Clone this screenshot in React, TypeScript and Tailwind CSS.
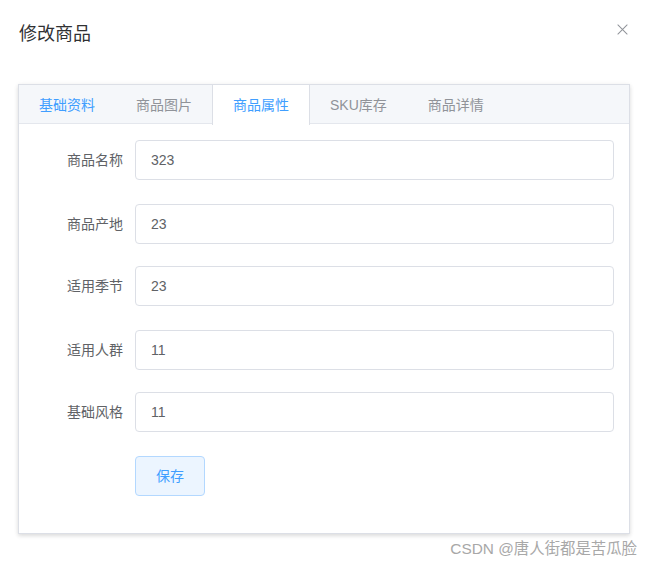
const font = {
  fontFamily: '"Liberation Sans", Arial, "Noto Sans CJK SC", sans-serif',
};

const tabs = ["基础资料", "商品图片", "商品属性", "SKU库存", "商品详情"];

const fields = [
  { label: "商品名称", value: "323", mb: "mb-[24px]" },
  { label: "商品产地", value: "23", mb: "mb-[22px]" },
  { label: "适用季节", value: "23", mb: "mb-[24px]" },
  { label: "适用人群", value: "11", mb: "mb-[22px]" },
  { label: "基础风格", value: "11", mb: "mb-[24px]" },
];

export default function App() {
  return (
    <div className="h-[564px] w-[650px] overflow-hidden bg-white" style={font}>
      <div className="flex items-center justify-between pl-[19px] pr-[22px] pt-[22px]">
        <h3 className="text-[18px] leading-[24px] text-[#303133]">修改商品</h3>
        <svg viewBox="0 0 12 12" className="mb-[10px] h-[11px] w-[11px] stroke-[#909399]" fill="none">
          <path d="M1 1l10 10M11 1L1 11" strokeWidth="1.1" strokeLinecap="round" />
        </svg>
      </div>

      <div className="pl-[18px] pr-[20px] pt-[38px]">
        <div className="border border-[#dcdfe6] bg-white shadow-[0_2px_4px_rgba(0,0,0,0.12),0_0_6px_rgba(0,0,0,0.04)]">
          <div className="flex h-[39px] border-b border-[#e4e7ed] bg-[#f5f7fa]">
            {tabs.map((t, i) => (
              <div
                key={t}
                className={
                  "-ml-px flex h-[40px] items-center border-x px-[20px] text-[14px] " +
                  (i === 2
                    ? "-mb-px border-[#dcdfe6] bg-white text-[#409eff]"
                    : i === 0
                      ? "border-transparent text-[#409eff]"
                      : "border-transparent text-[#909399]")
                }
              >
                {t}
              </div>
            ))}
          </div>

          <div className="px-[15px] pb-[15px] pt-[16px]">
            {fields.map((f) => (
              <div key={f.label} className={"flex h-[40px] items-center " + f.mb}>
                <label className="w-[101px] pr-[12px] text-right text-[14px] text-[#606266]">
                  {f.label}
                </label>
                <div className="flex h-[40px] w-[479px] items-center rounded-[4px] border border-[#dcdfe6] px-[15px] text-[14px] text-[#606266]">
                  {f.value}
                </div>
              </div>
            ))}
            <div className="mb-[22px] pl-[101px]">
              <button className="h-[40px] w-[70px] rounded-[4px] border border-[#b3d8ff] bg-[#ecf5ff] text-[14px] text-[#409eff]">
                保存
              </button>
            </div>
          </div>
        </div>
      </div>

      <div className="pr-[13px] pt-[5px] text-right text-[15.4px] leading-[20px] text-[#a8a8a8]">
        CSDN @唐人街都是苦瓜脸
      </div>
    </div>
  );
}
